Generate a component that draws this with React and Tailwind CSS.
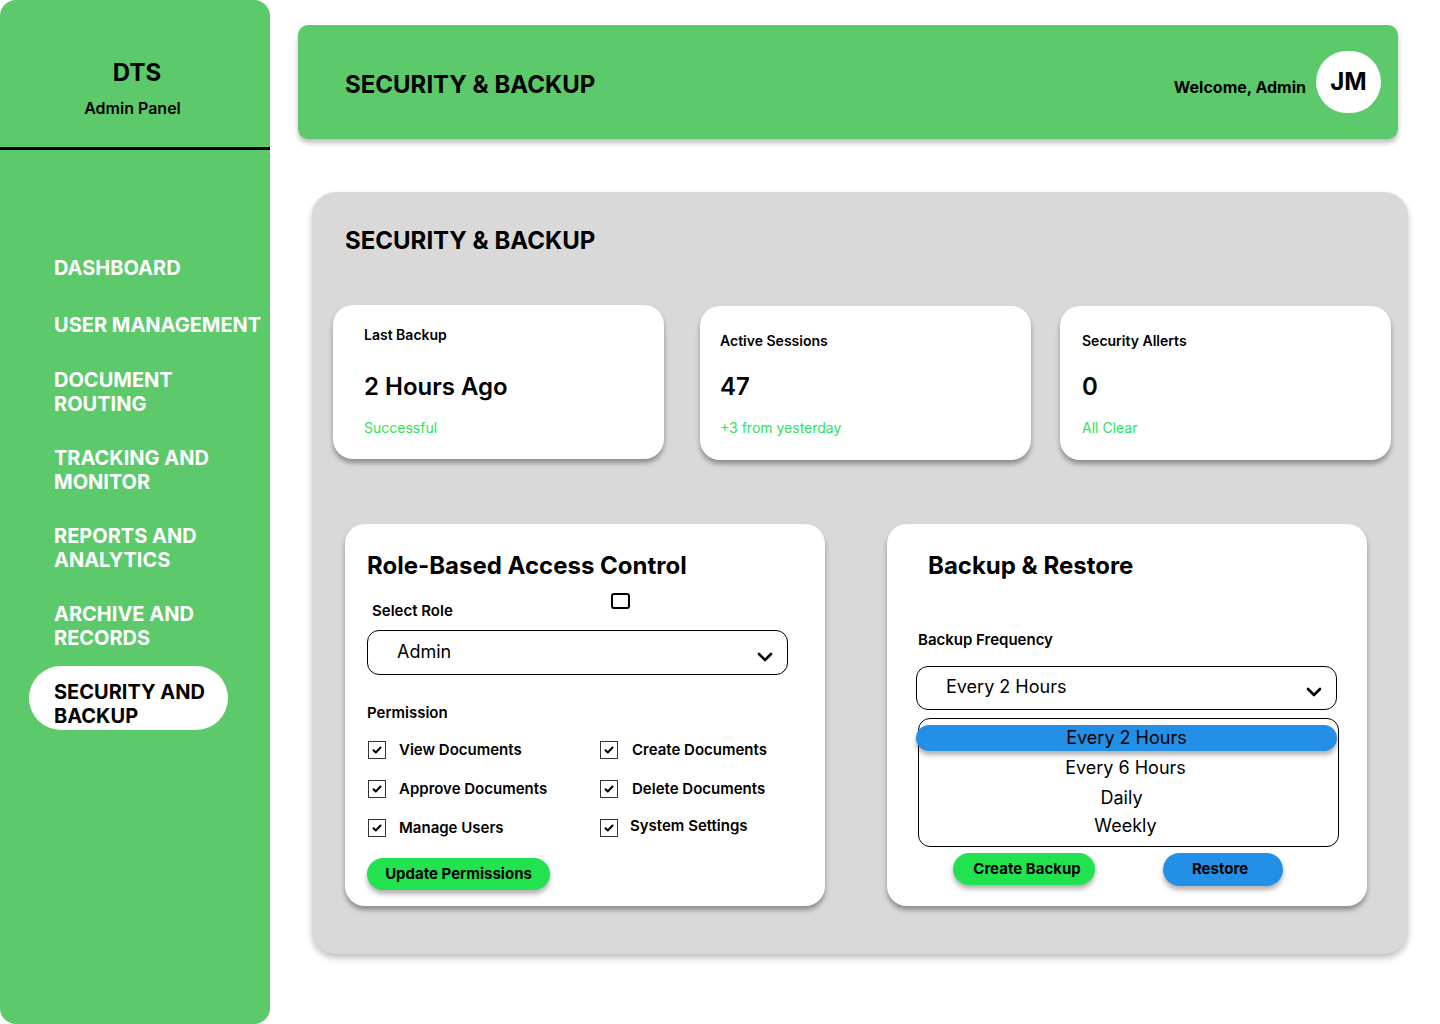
import React from "react";

const font = { fontFamily: "Inter, 'Noto Sans', sans-serif" };

function Chevron() {
  return (
    <svg width="16" height="10" viewBox="0 0 16 10" fill="none">
      <path d="M2 2l6 6 6-6" stroke="#000" strokeWidth="2.6" strokeLinecap="round" strokeLinejoin="round" />
    </svg>
  );
}

function Check({ label, gap = "ml-[13px]", up = false }) {
  return (
    <div className="flex items-center h-[18px]">
      <div className="w-[18px] h-[18px] border-[1.5px] border-[#333] flex items-center justify-center shrink-0">
        <svg width="10" height="8" viewBox="0 0 10 8" fill="none">
          <path d="M1.5 4.2l2.3 2.3L8.5 1.5" stroke="#000" strokeWidth="2" strokeLinecap="round" strokeLinejoin="round" />
        </svg>
      </div>
      <span className={`${gap} text-[15px] font-semibold text-black leading-[18px] ${up ? "-mt-[4px]" : ""}`}>{label}</span>
    </div>
  );
}

function StatCard({ label, value, note, pl, pt, gap, ml }) {
  return (
    <div className={`w-[331px] h-[154px] bg-white rounded-[20px] shadow-[0_4px_5px_rgba(0,0,0,0.35)] flex flex-col ${pl} ${pt} ${ml}`}>
      <div className="text-[14px] font-semibold leading-[20px] text-black">{label}</div>
      <div className={`text-[24px] font-semibold leading-[32px] text-black ${gap}`}>{value}</div>
      <div className="text-[14px] leading-[20px] text-[#2EE35B] mt-[15px]">{note}</div>
    </div>
  );
}

export default function App() {
  const navItem = "text-[20px] font-bold leading-[24px] text-white uppercase";
  return (
    <div style={font} className="w-[1440px] h-[1024px] bg-white flex overflow-hidden">
      {/* Sidebar */}
      <aside className="w-[270px] h-[1024px] shrink-0 bg-[#5CC96B] rounded-[16px] flex flex-col">
        <div className="h-[150px] border-b-[3px] border-black flex flex-col items-center">
          <div className="mt-[57px] ml-[4px] text-[24px] font-bold leading-[32px] text-black">DTS</div>
          <div className="mt-[7px] -ml-[5px] text-[16px] font-semibold leading-[24px] text-black">Admin Panel</div>
        </div>
        <nav className="flex flex-col mt-[106px]">
          <div className={`${navItem} pl-[54px]`}>DASHBOARD</div>
          <div className={`${navItem} pl-[54px] mt-[33px]`}>USER MANAGEMENT</div>
          <div className={`${navItem} pl-[54px] mt-[31px]`}>DOCUMENT<br />ROUTING</div>
          <div className={`${navItem} pl-[54px] mt-[30px]`}>TRACKING AND<br />MONITOR</div>
          <div className={`${navItem} pl-[54px] mt-[30px]`}>REPORTS AND<br />ANALYTICS</div>
          <div className={`${navItem} pl-[54px] mt-[30px]`}>ARCHIVE AND<br />RECORDS</div>
          <div className="ml-[29px] mt-[16px] w-[199px] h-[64px] bg-white rounded-full pl-[25px] pt-[14px]">
            <div className="text-[20px] font-bold leading-[24px] text-black">SECURITY AND<br />BACKUP</div>
          </div>
        </nav>
      </aside>

      {/* Main */}
      <main className="flex flex-col pl-[28px] pt-[25px]">
        <header className="w-[1100px] h-[114px] bg-[#5CC96B] rounded-[10px] shadow-[0_4px_5px_rgba(0,0,0,0.25)] flex items-center pl-[47px] pr-[17px]">
          <h1 className="text-[24px] font-bold leading-[32px] text-black mt-[6px]">SECURITY &amp; BACKUP</h1>
          <div className="ml-auto flex items-center">
            <span className="text-[16px] font-bold text-black mt-[10px]">Welcome, Admin</span>
            <div className="ml-[10px] w-[65px] h-[62px] rounded-full bg-white flex items-center justify-center">
              <span className="text-[24px] font-bold text-black">JM</span>
            </div>
          </div>
        </header>

        <section className="mt-[53px] ml-[14px] w-[1096px] h-[762px] bg-[#D9D9D9] rounded-[24px] shadow-[0_4px_6px_rgba(0,0,0,0.25)] flex flex-col pt-[33px]">
          <h2 className="pl-[33px] text-[24px] font-bold leading-[32px] text-black">SECURITY &amp; BACKUP</h2>

          <div className="flex mt-[48px] pl-[21px]">
            <StatCard label="Last Backup" value="2 Hours Ago" note="Successful" pl="pl-[31px]" pt="pt-[20px]" gap="mt-[26px]" ml="" />
            <StatCard label="Active Sessions" value="47" note="+3 from yesterday" pl="pl-[20px]" pt="pt-[25px]" gap="mt-[20px]" ml="ml-[36px] mt-[1px]" />
            <StatCard label="Security Allerts" value="0" note="All Clear" pl="pl-[22px]" pt="pt-[25px]" gap="mt-[20px]" ml="ml-[29px] mt-[1px]" />
          </div>

          <div className="flex mt-[64px] pl-[33px]">
            {/* RBAC */}
            <div className="w-[480px] h-[382px] bg-white rounded-[20px] shadow-[0_4px_5px_rgba(0,0,0,0.35)] flex flex-col pl-[22px] pt-[26px]">
              <h3 className="text-[24px] font-bold leading-[32px] text-black">Role-Based Access Control</h3>
              <div className="flex items-start mt-[11px]">
                <div className="w-[244px] pl-[5px] mt-[8px] text-[15px] font-semibold leading-[20px] text-black">Select Role</div>
                <div className="w-[19px] h-[16px] border-2 border-black rounded-[3px]"></div>
              </div>
              <div className="mt-[9px] w-[421px] h-[45px] border border-black rounded-[12px] flex items-center pl-[29px] pr-[14px]">
                <span className="text-[18px] text-black leading-[24px] -mt-[2px]">Admin</span>
                <span className="ml-auto mt-[8px]"><Chevron /></span>
              </div>
              <div className="mt-[28px] text-[15px] font-semibold leading-[20px] text-black">Permission</div>
              <div className="grid grid-cols-[232px_1fr] gap-y-[21px] mt-[18px] pl-[1px]">
                <Check label="View Documents" />
                <Check label="Create Documents" gap="ml-[14px]" />
                <Check label="Approve Documents" />
                <Check label="Delete Documents" gap="ml-[14px]" />
                <Check label="Manage Users" />
                <Check label="System Settings" gap="ml-[12px]" up />
              </div>
              <button className="mt-[21px] w-[183px] h-[32px] rounded-full bg-[#22E34F] shadow-[0_4px_5px_rgba(0,0,0,0.3)] text-[15px] font-bold text-black">
                Update Permissions
              </button>
            </div>

            {/* Backup */}
            <div className="ml-[62px] w-[480px] h-[382px] bg-white rounded-[20px] shadow-[0_4px_5px_rgba(0,0,0,0.35)] flex flex-col pt-[26px]">
              <h3 className="pl-[41px] text-[24px] font-bold leading-[32px] text-black">Backup &amp; Restore</h3>
              <div className="pl-[31px] mt-[48px] text-[15px] font-semibold leading-[20px] text-black">Backup Frequency</div>
              <div className="ml-[29px] mt-[16px] w-[421px] h-[44px] border border-black rounded-[12px] flex items-center pl-[29px] pr-[14px]">
                <span className="text-[18px] text-black leading-[24px] -mt-[2px]">Every 2 Hours</span>
                <span className="ml-auto mt-[8px]"><Chevron /></span>
              </div>
              <div className="ml-[31px] mt-[8px] w-[421px] h-[129px] border border-black rounded-[12px] flex flex-col pt-[6px] pr-[6px]">
                <div className="-ml-[3px] w-[421px] h-[26px] rounded-full bg-[#238FE6] shadow-[0_4px_5px_rgba(0,0,0,0.3)] text-center text-[18px] leading-[26px] text-black mb-[2px]">Every 2 Hours</div>
                <div className="h-[30px] text-center text-[18px] leading-[30px] text-black">Every 6 Hours</div>
                <div className="h-[30px] text-center text-[18px] leading-[30px] text-black -ml-[8px]">Daily</div>
                <div className="h-[28px] text-center text-[18px] leading-[26px] text-black">Weekly</div>
              </div>
              <div className="flex mt-[6px] pl-[66px]">
                <button className="w-[142px] h-[32px] rounded-full bg-[#22E34F] shadow-[0_4px_5px_rgba(0,0,0,0.3)] text-[15px] font-bold text-black pl-[6px]">Create Backup</button>
                <button className="ml-[68px] w-[120px] h-[33px] rounded-full bg-[#238FE6] shadow-[0_4px_5px_rgba(0,0,0,0.3)] text-[15px] font-bold text-black pr-[6px]">Restore</button>
              </div>
            </div>
          </div>
        </section>
      </main>
    </div>
  );
}
